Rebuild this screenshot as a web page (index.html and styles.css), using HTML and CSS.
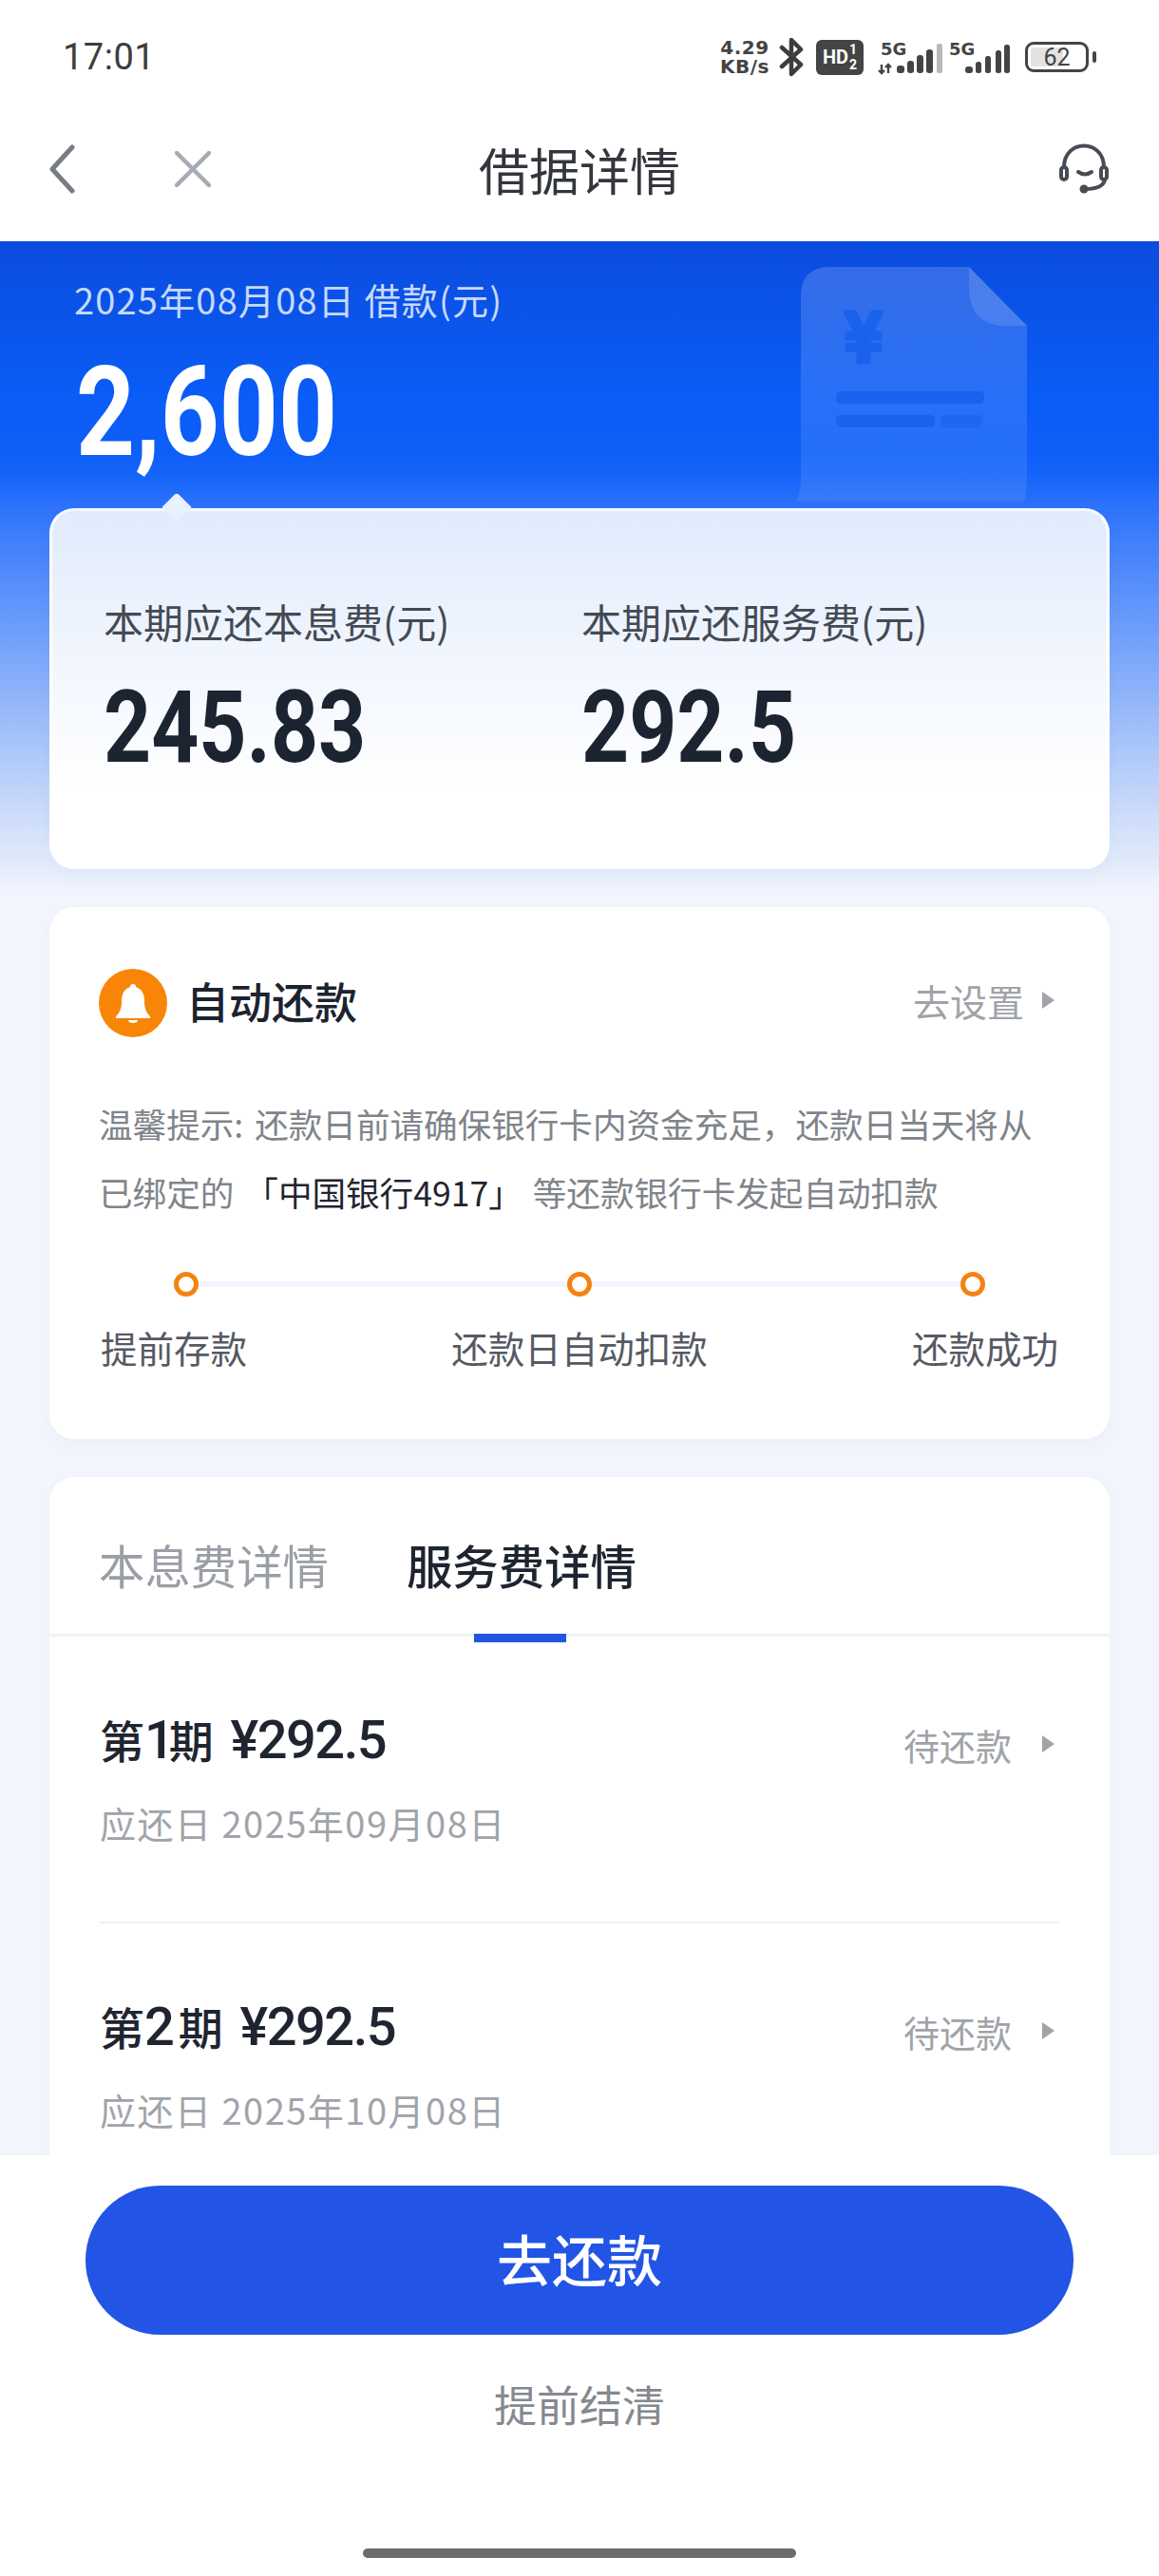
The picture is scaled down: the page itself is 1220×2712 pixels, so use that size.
FILE: index.html
```html
<!DOCTYPE html>
<html lang="zh-CN">
<head>
    <meta charset="UTF-8">
    <meta name="viewport" content="width=device-width, initial-scale=1.0">
    <title>借据详情</title>
    <link rel="stylesheet" href="styles.css">
</head>
<body>

    <div class="status-bar">
        <span class="status-time">17:01</span>
        <div class="status-icons">
            <div class="net-speed"><span>4.29</span><span>KB/s</span></div>
            <svg class="ico-bt" width="27" height="42" viewBox="0 0 27 42"><path d="M3 11 L23 29 L13 39 V3 L23 13 L3 31" fill="none" stroke="#3d3d3d" stroke-width="4.5" stroke-linejoin="round" stroke-linecap="round"/></svg>
            <div class="hd-badge"><span class="hd-text">HD</span><span class="hd-sim"><span>1</span><span>2</span></span></div>
            <svg class="sig-one" width="70" height="40" viewBox="0 0 70 40">
                <text x="4" y="18" class="sig-text">5G</text>
                <path d="M5 28v9M2 34l3 3 3-3M12 37v-9M9 31l3-3 3 3" stroke="#444" stroke-width="2.4" fill="none"/>
                <rect x="21" y="29" width="8" height="8" rx="3" fill="#444"/>
                <rect x="32" y="24" width="7" height="13" rx="3" fill="#444"/>
                <rect x="42" y="18" width="7" height="19" rx="3" fill="#444"/>
                <rect x="52" y="12" width="7" height="25" rx="3" fill="#444"/>
                <rect x="63" y="6" width="6" height="31" rx="2" fill="#b9b9b9"/>
            </svg>
            <svg width="67" height="40" viewBox="0 0 67 40">
                <text x="1" y="18" class="sig-text">5G</text>
                <rect x="18" y="30" width="8" height="7" rx="3" fill="#444"/>
                <rect x="29" y="25" width="6" height="12" rx="2.5" fill="#444"/>
                <rect x="39" y="19" width="6" height="18" rx="2.5" fill="#444"/>
                <rect x="50" y="13" width="6" height="24" rx="2.5" fill="#444"/>
                <rect x="59" y="7" width="6" height="30" rx="2.5" fill="#444"/>
            </svg>
            <div class="battery">
                <div class="battery-body"><div class="battery-fill"></div><span class="battery-num">62</span></div>
                <div class="battery-tip"></div>
            </div>
        </div>
    </div>

    <div class="nav-bar">
        <div class="nav-left">
            <svg width="30" height="52" viewBox="0 0 30 52"><path d="M26 3 L5 26 L26 49" fill="none" stroke="#777c85" stroke-width="5" stroke-linecap="round" stroke-linejoin="round"/></svg>
            <svg class="ico-close" width="38" height="38" viewBox="0 0 38 38"><path d="M2 2 L36 36 M36 2 L2 36" stroke="#a6aab3" stroke-width="4.5" stroke-linecap="round"/></svg>
        </div>
        <div class="nav-title">借据详情</div>
        <div class="nav-right">
            <svg width="58" height="56" viewBox="0 0 58 56" fill="none" stroke="#474c54" stroke-width="4" stroke-linecap="round">
                <path d="M8 26 C8 -4 50 -4 50 26"/>
                <rect x="5" y="26" width="6" height="13" rx="3"/>
                <rect x="47" y="26" width="6" height="13" rx="3"/>
                <path d="M23 31 Q30 36 37 31"/>
                <path d="M51 39 C50 46 42 49 30 49"/>
                <circle cx="29" cy="49" r="4.5" fill="#474c54" stroke="none"/>
            </svg>
        </div>
    </div>

    <div class="main">
        <svg class="doc-art" width="244" height="250" viewBox="0 0 244 250">
            <defs>
                <linearGradient id="docfill" x1="0" y1="0" x2="0" y2="1">
                    <stop offset="0" stop-color="#ffffff" stop-opacity=".17"/>
                    <stop offset="1" stop-color="#ffffff" stop-opacity=".08"/>
                </linearGradient>
            </defs>
            <path d="M3 34 Q3 3 34 3 H180 L241 65 V225 Q241 240 238 250 H-1 Q3 235 3 225 Z" fill="url(#docfill)"/>
            <path d="M180 3 L241 65 H212 Q180 60 180 25 Z" fill="#ffffff" fill-opacity=".12"/>
            <path d="M49 50 H60 L69 68 L78 50 H89 L78 72 H87 V79 H75 V84 H87 V91 H75 V104 H63 V91 H51 V84 H63 V79 H51 V72 H60 Z" fill="#1a62ee" stroke="#1a62ee" stroke-width="3" stroke-linejoin="round"/>
            <rect x="40" y="134" width="156" height="13" rx="5" fill="#1a62ee"/>
            <rect x="40" y="159" width="104" height="13" rx="5" fill="#1a62ee"/>
            <rect x="150" y="159" width="44" height="13" rx="5" fill="#1f66f0"/>
        </svg>

        <div class="hero">
            <div class="hero-date">2025年08月08日 借款(元)</div>
            <div class="hero-amount"><span>2,600</span></div>
        </div>

        <div class="card card-due">
            <div class="due-col">
                <div class="due-label">本期应还本息费(元)</div>
                <div class="due-num"><span>245.83</span></div>
            </div>
            <div class="due-col">
                <div class="due-label">本期应还服务费(元)</div>
                <div class="due-num"><span>292.5</span></div>
            </div>
        </div>

        <div class="card card-auto">
            <div class="auto-head">
                <div class="bell">
                    <svg width="38" height="42" viewBox="0 0 38 42"><path d="M19 1 C21 1 22 2 22 4 C28 6 31 11 31 19 C31 27 33 31 37 35 V37 H1 V35 C5 31 7 27 7 19 C7 11 10 6 16 4 C16 2 17 1 19 1 Z" fill="#fff"/><path d="M14 39 H24 C24 41 22 42 19 42 C16 42 14 41 14 39 Z" fill="#fff"/></svg>
                </div>
                <div class="auto-title">自动还款</div>
                <div class="link-grey">去设置<i class="tri"></i></div>
            </div>
            <p class="auto-tip">温馨提示: 还款日前请确保银行卡内资金充足，还款日当天将从<br>已绑定的<b class="bank">「中国银行4917」</b>等还款银行卡发起自动扣款</p>
            <div class="steps">
                <div class="step-track"><i class="dot"></i><i class="dot"></i><i class="dot"></i></div>
                <div class="step-labels"><span>提前存款</span><span>还款日自动扣款</span><span>还款成功</span></div>
            </div>
        </div>

        <div class="card card-list">
            <div class="tabs">
                <div class="tab">本息费详情</div>
                <div class="tab tab-on">服务费详情</div>
            </div>
            <div class="plan">
                <div class="plan-row">
                    <div class="plan-name">第<span class="num num-one">1</span>期 <span class="num price">¥292.5</span></div>
                    <div class="link-grey plan-state">待还款<i class="tri"></i></div>
                </div>
                <div class="plan-date">应还日 2025年09月08日</div>
            </div>
            <div class="plan plan-next">
                <div class="plan-row">
                    <div class="plan-name">第<span class="num num-two">2</span>期 <span class="num price">¥292.5</span></div>
                    <div class="link-grey plan-state">待还款<i class="tri"></i></div>
                </div>
                <div class="plan-date">应还日 2025年10月08日</div>
            </div>
        </div>
    </div>

    <div class="footer">
        <div class="pay-btn">去还款</div>
        <div class="settle">提前结清</div>
        <div class="home-bar"></div>
    </div>

</body>
</html>
```

FILE: styles.css
```css
* {
    box-sizing: border-box;
}
html, body {
    margin: 0;
    padding: 0;
}
body {
    width: 1220px;
    height: 2712px;
    overflow: hidden;
    display: flex;
    flex-direction: column;
    background-color: #fff;
    font-family: "Noto Sans CJK SC", Roboto, sans-serif;
    color: #1f2530;
}

/* status bar */
.status-bar {
    height: 110px;
    flex: none;
    display: flex;
    justify-content: space-between;
    align-items: center;
    padding: 10px 66px 0;
    color: #3d3d3d;
}
.status-time {
    font-family: Roboto, sans-serif;
    font-size: 38px;
    letter-spacing: .5px;
}
.status-icons {
    display: flex;
    align-items: center;
    gap: 12px;
}
.net-speed {
    display: flex;
    flex-direction: column;
    margin-right: -2px;
    font-family: "DejaVu Sans", sans-serif;
    font-weight: 700;
    font-size: 20px;
    line-height: 20px;
    letter-spacing: .5px;
    text-align: center;
    color: #444;
}
.hd-badge {
    width: 50px;
    height: 37px;
    margin-right: 2px;
    border-radius: 6px;
    background-color: #444;
    color: #fff;
    display: flex;
    align-items: center;
    justify-content: center;
    font-family: Roboto, sans-serif;
    font-weight: 700;
}
.hd-text {
    font-size: 20px;
}
.hd-sim {
    display: flex;
    flex-direction: column;
    font-size: 14px;
    line-height: 16px;
    margin-left: 1px;
}
.sig-one {
    margin-right: -7px;
}
.sig-text {
    font-family: "DejaVu Sans", sans-serif;
    font-weight: 700;
    font-size: 18px;
    fill: #444;
}
.battery {
    display: flex;
    align-items: center;
    gap: 4px;
    margin-left: 2px;
}
.battery-body {
    position: relative;
    width: 67px;
    height: 32px;
    border: 3px solid #444;
    border-radius: 9px;
    display: flex;
    align-items: center;
    justify-content: center;
    overflow: hidden;
}
.battery-fill {
    position: absolute;
    left: 3px;
    top: 3px;
    bottom: 3px;
    width: 34px;
    background-color: #e2e2e2;
    border-radius: 2px;
}
.battery-num {
    position: relative;
    font-family: Roboto, sans-serif;
    font-size: 25px;
    color: #444;
}
.battery-tip {
    width: 4px;
    height: 12px;
    background-color: #444;
    border-radius: 2px;
}

/* nav */
.nav-bar {
    height: 144px;
    flex: none;
    display: grid;
    grid-template-columns: 1fr auto 1fr;
    align-items: center;
    padding: 0 50px 8px;
}
.nav-left {
    display: flex;
    align-items: center;
    gap: 104px;
}
.nav-title {
    font-size: 53px;
    line-height: 70px;
    color: #33373d;
}
.nav-right {
    display: flex;
    justify-content: flex-end;
}

/* blue area */
.main {
    position: relative;
    flex: 1;
    min-height: 0;
    overflow: hidden;
    padding: 0 52px;
    background: linear-gradient(180deg, #0b4cde 0, #0a5cf6 160px, #0e5ff8 225px, #1464f9 245px, #2e72fb 280px, #4080fc 316px, #c6d8f9 590px, #f2f5fc 690px);
}
.doc-art {
    position: absolute;
    left: 840px;
    top: 24px;
    overflow: visible;
}
.hero {
    position: relative;
    height: 281px;
    padding: 34px 26px 0;
}
.hero-date {
    font-size: 38px;
    line-height: 54px;
    letter-spacing: 1.2px;
    color: #c6d9fc;
}
.hero-amount {
    margin-top: 27px;
    margin-left: 2px;
    font-family: Roboto, sans-serif;
    font-weight: 700;
    font-size: 132px;
    line-height: 130px;
    color: #fff;
}
.hero-amount span {
    display: inline-block;
    transform: scaleX(.82);
    transform-origin: left center;
}

.card {
    position: relative;
    background-color: #fff;
    border-radius: 26px;
    margin-bottom: 40px;
    box-shadow: 0 6px 14px rgba(60, 90, 160, .04);
}

.card-due {
    height: 380px;
    display: grid;
    grid-template-columns: 503px 1fr;
    padding: 88px 54px 0;
    background: linear-gradient(180deg, #e1ebfd 0, #ffffff 78%);
    border: 3px solid #fff;
    border-top-color: #f4f8ff;
}
.card-due::before {
    content: "";
    position: absolute;
    left: 120px;
    top: -15px;
    width: 22px;
    height: 22px;
    background-color: #e9f0fe;
    transform: rotate(45deg);
    border-radius: 4px 0 0 0;
}
.due-label {
    font-size: 42px;
    line-height: 56px;
    color: #444a54;
}
.due-num {
    margin-top: 29px;
    font-family: Roboto, sans-serif;
    font-weight: 700;
    font-size: 106px;
    line-height: 110px;
    color: #1c2431;
}
.due-num span {
    display: inline-block;
    transform: scaleX(.825);
    transform-origin: left center;
}

.card-auto {
    height: 560px;
    padding: 65px 52px 0;
}
.auto-head {
    display: flex;
    align-items: center;
    height: 72px;
}
.bell {
    width: 72px;
    height: 72px;
    border-radius: 50%;
    background-color: #f98507;
    display: flex;
    align-items: center;
    justify-content: center;
    margin-right: 20px;
}
.auto-title {
    flex: 1;
    padding-bottom: 6px;
    font-size: 45px;
    font-weight: 500;
    color: #1c2330;
}
.link-grey {
    display: flex;
    align-items: center;
    font-size: 39px;
    color: #a0a3a9;
}
.auto-head .link-grey {
    padding-bottom: 6px;
}
.tri {
    width: 0;
    height: 0;
    margin-left: 19px;
    margin-right: 6px;
    border-left: 13px solid #a0a3a9;
    border-top: 9px solid transparent;
    border-bottom: 9px solid transparent;
}
.auto-tip {
    margin: 55px 0 0;
    font-size: 35.6px;
    line-height: 72px;
    word-spacing: 4px;
    color: #80848a;
    white-space: nowrap;
}
.bank {
    font-weight: 400;
    margin: 0 11px;
    color: #1f2530;
}
.steps {
    margin-top: 48px;
}
.step-track {
    display: flex;
    justify-content: space-between;
    padding: 0 79px;
    background: linear-gradient(#f2f5fb, #f2f5fb) center / calc(100% - 158px) 6px no-repeat;
}
.dot {
    width: 26px;
    height: 26px;
    border: 5px solid #f5820f;
    border-radius: 50%;
    background-color: #fff;
}
.step-labels {
    display: flex;
    justify-content: space-between;
    margin-top: 25px;
    padding: 0 2px;
    font-size: 38.5px;
    line-height: 56px;
    color: #555a63;
}

.card-list {
    margin-bottom: 0;
}
.tabs {
    height: 168px;
    display: flex;
    gap: 82px;
    padding: 52px 52px 0;
    border-bottom: 3px solid #f0f2f6;
}
.tab {
    position: relative;
    font-size: 48.4px;
    line-height: 80px;
    color: #9a9ea5;
}
.tab-on {
    font-weight: 500;
    color: #1f2530;
}
.tab-on::after {
    content: "";
    position: absolute;
    left: 71px;
    bottom: -9px;
    width: 97px;
    height: 9px;
    background-color: #2255e0;
}
.plan {
    margin: 0 53px;
    padding: 78px 0 79px;
}
.plan-next {
    border-top: 2px solid #eef0f4;
}
.plan-row {
    display: flex;
    justify-content: space-between;
    align-items: center;
    height: 60px;
}
.plan-name {
    font-size: 47px;
    font-weight: 500;
    line-height: 60px;
    color: #1f2530;
}
.num {
    font-family: Roboto, sans-serif;
    font-size: 56px;
}
.num-one {
    letter-spacing: -6px;
}
.num-two {
    letter-spacing: 4px;
}
.price {
    margin-left: 7px;
    letter-spacing: -1.5px;
}
.plan-state {
    padding-top: 10px;
    margin-right: -1px;
    font-size: 38px;
}
.plan-state .tri {
    margin-left: 32px;
}
.plan-date {
    margin-top: 33px;
    font-size: 38px;
    line-height: 50px;
    letter-spacing: 1.5px;
    color: #a0a4aa;
}

/* bottom buttons */
.footer {
    height: 443px;
    flex: none;
    background-color: #fff;
    display: flex;
    flex-direction: column;
    align-items: center;
    padding-top: 32px;
}
.pay-btn {
    width: 1040px;
    height: 157px;
    padding-bottom: 5px;
    border-radius: 79px;
    background-color: #2255e6;
    color: #fff;
    font-size: 58px;
    font-weight: 500;
    display: flex;
    align-items: center;
    justify-content: center;
}
.settle {
    margin-top: 43px;
    font-size: 45px;
    line-height: 60px;
    color: #85888e;
}
.home-bar {
    width: 456px;
    height: 10px;
    margin-top: 122px;
    border-radius: 5px;
    background-color: #6c6c6c;
}
```
